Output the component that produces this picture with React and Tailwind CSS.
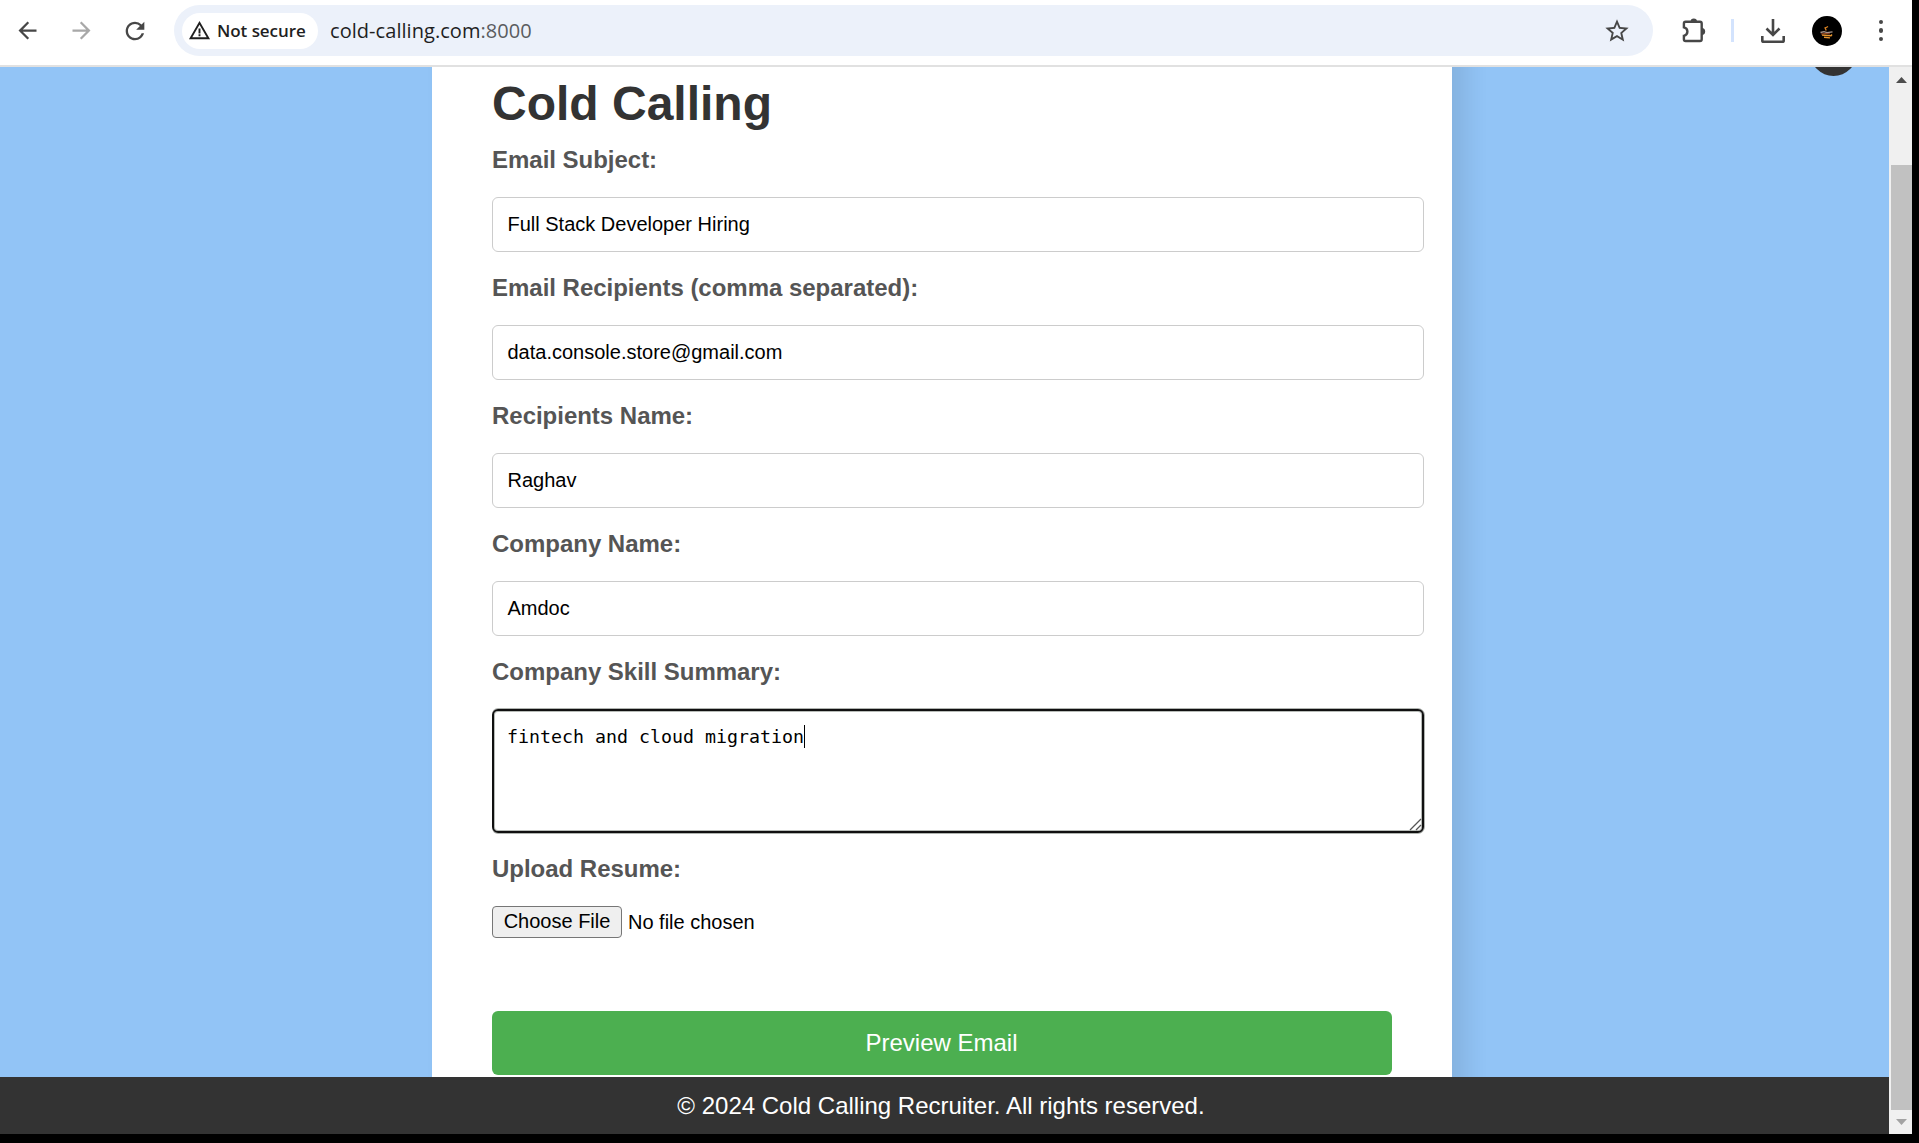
import React from "react";
import { MdArrowBack, MdArrowForward, MdRefresh, MdStarBorder, MdWarningAmber } from "react-icons/md";

const fields = [
  { label: "Email Subject:", value: "Full Stack Developer Hiring" },
  { label: "Email Recipients (comma separated):", value: "data.console.store@gmail.com" },
  { label: "Recipients Name:", value: "Raghav" },
  { label: "Company Name:", value: "Amdoc" },
];

function Label({ children }) {
  return (
    <div className="h-[27px] text-2xl leading-[27px] font-bold tracking-[-0.02px] text-[#555]">{children}</div>
  );
}

function PuzzleIcon() {
  return (
    <svg width="26" height="26" viewBox="0 0 26 26" fill="none" className="shrink-0">
      <path
        d="M4.6 3.700H19c1 0 1.700.7 1.700 1.700v15.900c0 1-.7 1.700-1.700 1.700H4.600c-1 0-1.700-.7-1.700-1.700v-3.500c2.300-.5 3.500-2 3.500-4.200S5.200 9.900 2.900 9.400V5.400c0-1 .7-1.700 1.700-1.700Z"
        stroke="#474747"
        strokeWidth="2.4"
      />
      <path d="M9.600 3.500a3.200 3 0 0 1 6.400 0ZM20.800 10a3.300 3.400 0 0 1 0 7Z" fill="#474747" />
    </svg>
  );
}

function DownloadIcon() {
  return (
    <svg width="26" height="26" viewBox="0 0 26 26" fill="none" stroke="#474747" strokeWidth="2.6" className="shrink-0">
      <path d="M13 1v15.500M6.500 10.500l6.500 6.500 6.500-6.500M2.300 18v4.500c0 .8.5 1.300 1.300 1.300h18.800c.8 0 1.300-.5 1.300-1.300V18" />
    </svg>
  );
}

function Avatar() {
  return (
    <svg width="30" height="30" viewBox="0 0 30 30" className="shrink-0">
      <circle cx="15" cy="15" r="15" fill="#000" />
      <path d="M12.500 12c1.500-.2 2.500-.8 3.500-1.500M13 11.500l1.200 3" stroke="#d98222" strokeWidth="1.300" fill="none" />
      <path d="M10 19l9 .8 1-1.300M12 21.300l6 .6" stroke="#e8962e" strokeWidth="1.400" fill="none" />
      <path d="M8.500 16.500l3.500-.8 3 1 5.500-.8" stroke="#a8958c" strokeWidth="1.300" fill="none" />
      <path d="M9 18l5-.6 4 .5" stroke="#9b4b28" strokeWidth="1" fill="none" />
    </svg>
  );
}

function Toolbar() {
  return (
    <header className="flex h-[67px] shrink-0 items-start border-b-2 border-[#e1e1e1] bg-white font-['Open_Sans',sans-serif]">
      <div className="flex h-[61px] w-full items-center">
        <MdArrowBack size={27} className="ml-[14px] shrink-0 text-[#474747]" />
        <MdArrowForward size={27} className="ml-[27px] shrink-0 text-[#a8a8a8]" />
        <MdRefresh size={28} className="ml-[26px] shrink-0 text-[#474747]" />
        <div className="ml-[25px] flex h-[51px] w-[1479px] shrink-0 items-center rounded-full bg-[#ecf1fa] pl-2">
          <div className="flex h-9 w-[136px] items-center rounded-full bg-white pl-[6px]">
            <MdWarningAmber size={23} className="shrink-0 text-[#1f1f1f]" />
            <span className="ml-[6px] text-[17px] leading-6 font-semibold tracking-[-0.05px] whitespace-nowrap text-[#1f1f1f]">
              Not secure
            </span>
          </div>
          <div className="ml-3 text-[20px] leading-7 tracking-[0.05px] whitespace-nowrap text-[#1f1f1f]">
            cold-calling.com<span className="text-[#5a5c60]">:8000</span>
          </div>
          <MdStarBorder size={28} className="mr-[22px] ml-auto shrink-0 text-[#474747]" />
        </div>
        <div className="ml-[28px] flex items-center">
          <PuzzleIcon />
          <div className="ml-[24px] h-[23px] w-[3px] bg-[#d3e3fd]" />
          <div className="ml-[26px] flex">
            <DownloadIcon />
          </div>
          <div className="ml-[26px] flex">
            <Avatar />
          </div>
          <div className="ml-[36.500px] flex flex-col gap-1">
            <span className="size-[4.500px] rounded-full bg-[#474747]" />
            <span className="size-[4.500px] rounded-full bg-[#474747]" />
            <span className="size-[4.500px] rounded-full bg-[#474747]" />
          </div>
        </div>
      </div>
    </header>
  );
}

function Scrollbar() {
  return (
    <div className="flex w-[23px] shrink-0 flex-col items-end bg-[#f0f0f0]">
      <div className="flex h-[98px] w-full justify-center pt-[10px] pl-px">
        <svg width="11" height="6" viewBox="0 0 11 6">
          <path d="M0 6L5.500 0L11 6Z" fill="#4d4d4d" />
        </svg>
      </div>
      <div className="h-[945px] w-[21px] bg-[#c1c1c1]" />
      <div className="flex w-full justify-center pt-[9px] pl-px">
        <svg width="11" height="6" viewBox="0 0 11 6">
          <path d="M0 0L5.500 6L11 0Z" fill="#a3a3a3" />
        </svg>
      </div>
    </div>
  );
}

export default function App() {
  return (
    <div className="h-[1143px] w-[1919px] overflow-hidden bg-black font-['Liberation_Sans',Arial,sans-serif]">
      <div className="flex h-[1134px] w-[1912px] flex-col">
        <Toolbar />
        <div className="flex min-h-0 flex-1">
          <div className="relative flex w-[1889px] flex-col overflow-hidden bg-[#92c4f6]">
            <div className="absolute -top-[38px] left-[1809.500px] size-[47px] rounded-full bg-[#333]" />
            <main className="-mt-10 ml-[432px] h-[1100px] w-[1020px] shrink-0 bg-white px-[60px] pt-[49px] shadow-[15px_0_22px_rgba(0,0,0,0.09)]">
              <h1 className="text-5xl leading-[55px] font-bold text-[#333]">Cold Calling</h1>
              <div className="mt-[15px] flex w-[932px] flex-col gap-[22px]">
                {fields.map((f) => (
                  <div key={f.label} className="flex flex-col gap-6">
                    <Label>{f.label}</Label>
                    <div className="flex h-[55px] items-center rounded-md border border-[#ccc] pr-[14px] pb-[2px] pl-[14.500px] text-xl leading-6 text-black">
                      {f.value}
                    </div>
                  </div>
                ))}
                <div className="flex flex-col gap-6">
                  <Label>Company Skill Summary:</Label>
                  <div className="flex h-[124px] items-start rounded-md border-2 border-[#101010] px-[13px] pt-[14px] shadow-[0_1px_0_#b0b4b0,0_-1px_0_#b0b4b0,1px_0_0_#b0b4b0,inset_0_0_0_1px_#b8bcb8]">
                    <span className="border-r border-black font-['DejaVu_Sans_Mono',monospace] text-[18.270px] leading-[23px] whitespace-nowrap text-black">
                      fintech and cloud migration
                    </span>
                    <svg width="13" height="13" viewBox="0 0 13 13" className="mt-auto -mr-[13px] ml-auto" fill="none" stroke="#555">
                      <path d="M1 12L12 1M7 12L12 7" strokeWidth="1.300" />
                    </svg>
                  </div>
                </div>
                <div className="flex flex-col gap-6">
                  <Label>Upload Resume:</Label>
                  <div className="flex h-8 items-center text-xl leading-6 text-black">
                    <button className="h-8 w-[130px] shrink-0 rounded-[4px] border border-[#767676] bg-[#efefef] pb-[2px] whitespace-nowrap">
                      Choose File
                    </button>
                    <span className="ml-[6px]">No file chosen</span>
                  </div>
                </div>
              </div>
              <button className="mt-[73px] block h-16 w-[900px] rounded-md bg-[#4caf50] pr-px text-2xl text-white">
                Preview Email
              </button>
            </main>
            <footer className="relative -mt-[50px] flex h-[57px] shrink-0 items-center justify-center bg-[#333] pr-[7px] text-2xl leading-7 text-white">
              © 2024 Cold Calling Recruiter. All rights reserved.
            </footer>
          </div>
          <Scrollbar />
        </div>
      </div>
    </div>
  );
}
